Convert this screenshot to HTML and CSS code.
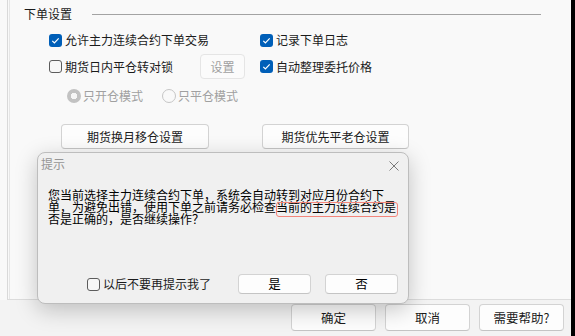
FILE: index.html
```html
<!DOCTYPE html>
<html lang="zh-CN">
<head>
<meta charset="utf-8">
<title>下单设置</title>
<link rel="stylesheet" href="styles.css">
</head>
<body>
<div class="window">
  <div class="main">
    <div class="panel">
      <div class="group-head">
        <span class="group-title">下单设置</span>
        <span class="group-line"></span>
      </div>
      <div class="opts">
        <div class="opt-grid">
          <label class="chk span2"><span class="box on"><svg viewBox="0 0 13 13" width="13" height="13"><polyline points="3.3,6.8 5.4,8.9 9.7,4.4" fill="none" stroke="#fff" stroke-width="1.2"/></svg></span>允许主力连续合约下单交易</label>
          <label class="chk"><span class="box on"><svg viewBox="0 0 13 13" width="13" height="13"><polyline points="3.3,6.8 5.4,8.9 9.7,4.4" fill="none" stroke="#fff" stroke-width="1.2"/></svg></span>记录下单日志</label>
          <label class="chk"><span class="box"></span>期货日内平仓转对锁</label>
          <button class="btn btn-dis">设置</button>
          <label class="chk"><span class="box on"><svg viewBox="0 0 13 13" width="13" height="13"><polyline points="3.3,6.8 5.4,8.9 9.7,4.4" fill="none" stroke="#fff" stroke-width="1.2"/></svg></span>自动整理委托价格</label>
        </div>
        <div class="radios">
          <label class="rad first"><span class="dot sel"></span>只开仓模式</label>
          <label class="rad"><span class="dot"></span>只平仓模式</label>
        </div>
        <div class="btn-row">
          <button class="btn wide">期货换月移仓设置</button>
          <button class="btn wide2">期货优先平老仓设置</button>
        </div>
      </div>
    </div>
  </div>
  <div class="bottom">
    <button class="fbtn">确定</button>
    <button class="fbtn">取消</button>
    <button class="fbtn">需要帮助?</button>
  </div>

  <div class="dialog">
    <div class="dlg-title">
      <span>提示</span>
      <svg class="close" viewBox="0 0 10 10" width="10" height="10"><path d="M0.5 0.5 L9.5 9.5 M9.5 0.5 L0.5 9.5" stroke="#7a7a7a" stroke-width="1" fill="none"/></svg>
    </div>
    <div class="dlg-body">
      您当前选择主力连续合约下单，系统会自动转到对应月份合约下<br>单，为避免出错，使用下单之前请务必检查当前的主力连续合约是<br>否是正确的，是否继续操作？
      <span class="mark"></span>
    </div>
    <div class="dlg-foot">
      <label class="chk"><span class="box"></span>以后不要再提示我了</label>
      <div class="dlg-btns">
        <button class="dbtn">是</button>
        <button class="dbtn">否</button>
      </div>
    </div>
  </div>
</div>
</body>
</html>
```
FILE: styles.css
```css
html, body {
  margin: 0;
  background: #000;
}

.window {
  position: relative;
  box-sizing: border-box;
  width: 575px;
  height: 336px;
  border-right: 4px solid #000;
  background: #f9f9f9;
  font-family: "Noto Sans CJK SC", "Microsoft YaHei", sans-serif;
  font-size: 12px;
  line-height: 16px;
  color: #1b1b1b;
  display: flex;
  flex-direction: column;
  overflow: hidden;
}

.main {
  box-sizing: border-box;
  height: 300px;
  margin-left: 7px;
  border-left: 1px solid #d9d9d9;
  border-bottom: 1px solid #dcdcdc;
}

.panel {
  box-sizing: border-box;
  height: 100%;
  margin-left: 1px;
  border-left: 1px solid #e6e6e6;
}

.group-head {
  display: flex;
  align-items: center;
  height: 16px;
  padding: 6px 0 0 14px;
}

.group-title {
  line-height: 16px;
}

.group-line {
  width: 449px;
  height: 1px;
  margin-left: 20px;
  background: #a3a3a3;
}

.opts {
  padding-left: 39px;
}

.opt-grid {
  display: grid;
  grid-template-columns: 151px 60px auto;
  grid-template-rows: 20px 25px;
  row-gap: 4px;
  margin-top: 8px;
  align-items: center;
}

.span2 {
  grid-column: 1 / 3;
}

.chk {
  display: flex;
  align-items: center;
  gap: 3px;
  white-space: nowrap;
}

.box {
  box-sizing: border-box;
  width: 13px;
  height: 13px;
  flex: none;
  border: 1px solid #5c5c5c;
  border-radius: 3px;
  background: #f7f7f7;
}

.box.on {
  border: none;
  background: #005fb8;
}

.box svg {
  display: block;
}

.radios {
  display: flex;
  align-items: center;
  height: 20px;
  margin-top: 7px;
  padding-left: 18px;
}

.rad {
  display: flex;
  align-items: center;
  gap: 2px;
  color: #a0a0a0;
}

.rad.first {
  width: 95px;
}

.dot {
  box-sizing: border-box;
  width: 14px;
  height: 14px;
  border-radius: 50%;
  border: 1px solid #c6c6c6;
  background: #f9f9f9;
  position: relative;
}

.dot.sel {
  border: none;
  background: radial-gradient(circle, #f6f6f6 0 3px, #c2c2c2 3.5px);
}

.btn {
  box-sizing: border-box;
  height: 25px;
  padding: 0;
  border: 1px solid #d3d3d3;
  border-bottom-color: #c4c4c4;
  border-radius: 4px;
  background: #fdfdfd;
  font: inherit;
  color: #1b1b1b;
}

.btn-dis {
  width: 45px;
  color: #a0a0a0;
  border-color: #e5e5e5;
  background: #fbfbfb;
}

.btn-row {
  display: flex;
  gap: 53px;
  margin-top: 18px;
  padding-left: 12px;
}

.wide {
  width: 148px;
}

.wide2 {
  width: 147px;
}

.bottom {
  flex: 1;
  box-sizing: border-box;
  display: flex;
  justify-content: flex-end;
  align-items: flex-start;
  gap: 9px;
  padding: 4px 7px 0 0;
  background: #f3f3f3;
}

.fbtn {
  box-sizing: border-box;
  width: 85px;
  height: 27px;
  padding: 0;
  border: 1px solid #d3d3d3;
  border-bottom-color: #c4c4c4;
  border-radius: 4px;
  background: #fdfdfd;
  font: inherit;
  font-size: 12.5px;
  color: #1b1b1b;
}

.dialog {
  position: absolute;
  left: 37px;
  top: 152px;
  box-sizing: border-box;
  width: 372px;
  height: 152px;
  border: 1px solid #bdbdbd;
  border-radius: 8px;
  background: #f0f0f0;
  box-shadow: 0 6px 22px rgba(0, 0, 0, 0.22);
  display: flex;
  flex-direction: column;
}

.dlg-title {
  display: flex;
  align-items: center;
  height: 22px;
  padding-left: 3px;
  color: #959595;
}

.close {
  margin-left: auto;
  margin-right: 9px;
  margin-top: 3px;
}

.dlg-body {
  position: relative;
  margin-top: 14px;
  padding-left: 10px;
  line-height: 12px;
  color: #000;
  white-space: nowrap;
}

.mark {
  position: absolute;
  left: 238px;
  top: 13px;
  box-sizing: border-box;
  width: 122px;
  height: 15px;
  border: 1.5px solid #f3857b;
  border-radius: 3px;
}

.dlg-foot {
  display: flex;
  align-items: center;
  height: 20px;
  margin-top: auto;
  margin-bottom: 9px;
  padding: 0 10px 0 49px;
}

.dlg-btns {
  display: flex;
  gap: 14px;
  margin-left: auto;
}

.dbtn {
  box-sizing: border-box;
  width: 73px;
  height: 20px;
  padding: 0;
  border: 1px solid #d3d3d3;
  border-bottom-color: #c4c4c4;
  border-radius: 4px;
  background: #fdfdfd;
  font: inherit;
  font-size: 12.5px;
  line-height: 18px;
  color: #000;
}
```
